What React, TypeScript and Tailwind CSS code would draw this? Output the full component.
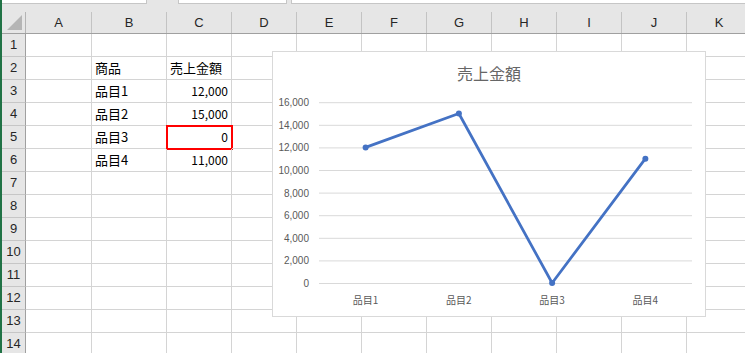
import React from 'react';

const cols = [
  { name: 'A', w: 'w-[66px]' },
  { name: 'B', w: 'w-[75px]' },
  { name: 'C', w: 'w-[65px]' },
  { name: 'D', w: 'w-[65px]' },
  { name: 'E', w: 'w-[65px]' },
  { name: 'F', w: 'w-[65px]' },
  { name: 'G', w: 'w-[65px]' },
  { name: 'H', w: 'w-[65px]' },
  { name: 'I', w: 'w-[65px]' },
  { name: 'J', w: 'w-[65px]' },
  { name: 'K', w: 'w-[65px]' },
];

// row -> { B, C }
const data: Record<number, { b: string; c: string }> = {
  2: { b: '商品', c: '売上金額' },
  3: { b: '品目1', c: '12,000' },
  4: { b: '品目2', c: '15,000' },
  5: { b: '品目3', c: '0' },
  6: { b: '品目4', c: '11,000' },
};

const values = [12000, 15000, 0, 11000];
const cats = ['品目1', '品目2', '品目3', '品目4'];
const ticks = [0, 2000, 4000, 6000, 8000, 10000, 12000, 14000, 16000];

const X0 = 46;
const X1 = 419;
const Y0 = 231;
const STEP = 22.6;
const yOf = (v: number) => Y0 - (v / 2000) * STEP;
const xOf = (i: number) => X0 + ((X1 - X0) / 4) * (i + 0.5);

function Chart() {
  const pts = values.map((v, i) => `${xOf(i)},${yOf(v)}`).join(' ');
  return (
    <div className="absolute left-[272px] top-[51px] w-[434px] h-[266px] border border-[#d9d9d9] bg-white">
      <div className="pt-[11px] text-center text-[16px] leading-[20px] text-[#666666] font-['Noto_Sans_CJK_JP',sans-serif]">
        売上金額
      </div>
      <svg className="absolute inset-0" width="432" height="264">
        {ticks.map((t) => (
          <g key={t}>
            <line x1={X0} x2={X1} y1={yOf(t) + 0.5} y2={yOf(t) + 0.5} stroke="#d9d9d9" strokeWidth="1" />
            <text
              x="36"
              y={yOf(t) + 4}
              textAnchor="end"
              fontSize="10"
              fill="#595959"
              fontFamily="'Liberation Sans', sans-serif"
            >
              {t.toLocaleString('en-US')}
            </text>
          </g>
        ))}
        {cats.map((c, i) => (
          <text
            key={c}
            x={xOf(i)}
            y="252"
            textAnchor="middle"
            fontSize="10"
            fill="#595959"
            fontFamily="'Noto Sans CJK JP', sans-serif"
          >
            {c}
          </text>
        ))}
        <polyline points={pts} fill="none" stroke="#4472c4" strokeWidth="2.75" strokeLinejoin="round" strokeLinecap="round" />
        {values.map((v, i) => (
          <circle key={i} cx={xOf(i)} cy={yOf(v)} r="3" fill="#4472c4" />
        ))}
      </svg>
    </div>
  );
}

export default function App() {
  const rows = Array.from({ length: 14 }, (_, i) => i + 1);
  return (
    <div className="relative w-[745px] h-[353px] overflow-hidden bg-white flex font-['Noto_Sans_CJK_JP',sans-serif]">
      <div className="w-[2px] shrink-0 bg-[#217346]" />
      <div className="flex flex-col flex-1 min-w-0">
        {/* strip above headers */}
        <div className="h-[12px] shrink-0 bg-[#e6e6e6] flex gap-0">
          <div className="w-[145px] h-[4px] bg-white border-b border-r border-[#c6c6c6]" />
          <div className="ml-[31px] w-[109px] h-[4px] bg-white border-b border-x border-[#c6c6c6]" />
          <div className="ml-[4px] flex-1 h-[4px] bg-white border-b border-l border-[#c6c6c6]" />
        </div>
        {/* column headers */}
        <div className="flex h-[22px] shrink-0 bg-[#e6e6e6] border-b border-[#a0a0a0]">
          <div className="w-[24px] shrink-0 border-r border-[#b4b4b4] relative">
            <svg className="absolute right-[3px] bottom-[3px]" width="15" height="15">
              <polygon points="15,0 15,15 0,15" fill="#b5b5b5" />
            </svg>
          </div>
          {cols.map((c) => (
            <div
              key={c.name}
              className={`${c.w} shrink-0 border-r border-[#c3c3c3] flex items-center justify-center text-[13px] text-[#262626] font-['Liberation_Sans',sans-serif]`}
            >
              {c.name}
            </div>
          ))}
        </div>
        {rows.map((r) => (
          <div key={r} className="flex h-[23px] shrink-0">
            <div className="w-[24px] shrink-0 bg-[#e6e6e6] border-r border-[#a0a0a0] border-b border-b-[#c6c6c6] flex items-center justify-center text-[13px] text-[#262626] font-['Liberation_Sans',sans-serif]">
              {r}
            </div>
            {cols.map((c) => {
              const d = data[r];
              const isB = c.name === 'B';
              const isC = c.name === 'C';
              const text = d ? (isB ? d.b : isC ? d.c : '') : '';
              const numeric = isC && r > 2;
              return (
                <div
                  key={c.name}
                  className={`${c.w} shrink-0 relative border-r border-b border-[#d4d4d4] flex items-center text-black px-[3px] ${numeric ? 'justify-end text-[12px]' : 'justify-start text-[13px]'}`}
                >
                  {text}
                  {isC && r === 5 && (
                    <div className="absolute -left-[1px] -top-[1px] w-[67px] h-[25px] border-2 border-[#ff0000]" />
                  )}
                </div>
              );
            })}
          </div>
        ))}
      </div>
      <Chart />
    </div>
  );
}
